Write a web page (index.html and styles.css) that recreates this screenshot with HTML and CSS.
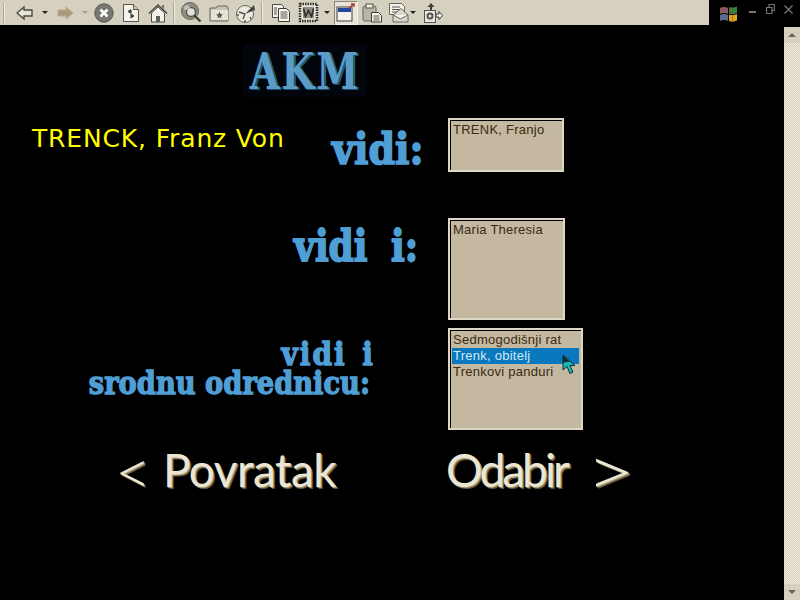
FILE: index.html
```html
<!DOCTYPE html>
<html lang="hr">
<head>
<meta charset="utf-8">
<title>AKM</title>
<link rel="stylesheet" href="styles.css">
</head>
<body>
<header class="chrome">
  <div class="toolbar">
    <span class="sep first"></span>
    <span class="cell w-back"><svg width="18" height="16" viewBox="0 0 18 16"><path d="M1 8 8 2v3h8v6H8v3z" fill="#e8e4d8" stroke="#4a4a40" stroke-width="1.4"/></svg></span>
    <span class="cell w-drop"><i class="caret"></i></span>
    <span class="cell w-back"><svg width="18" height="16" viewBox="0 0 18 16"><path d="M17 8 10 2v3H2v6h8v3z" fill="#ab9a78" stroke="#b8aa8c"/></svg></span>
    <span class="cell w-drop"><i class="caret faint"></i></span>
    <span class="cell"><svg width="20" height="20" viewBox="0 0 20 20"><circle cx="10" cy="10" r="9.2" fill="#77776f" stroke="#55554f"/><path d="M6.500 6.500l7 7m0-7-7 7" stroke="#fff" stroke-width="2.600"/></svg></span>
    <span class="cell"><svg width="18" height="20" viewBox="0 0 18 20"><path d="M1.500 1.500h10l5 5v12h-15z" fill="#f4f2ea" stroke="#55554f"/><path d="M11.500 1.500v5h5" fill="#cfcabc" stroke="#55554f"/><path d="M9 6.500 6 8.500l3 2zM6.500 8.500h3M9 15l3-2-3-2zM11.500 13h-3" fill="#3d4a3d" stroke="#3d4a3d"/></svg></span>
    <span class="cell"><svg width="20" height="20" viewBox="0 0 20 20"><path d="M1 10.500 10 2l9 8.500" fill="none" stroke="#4a4a40" stroke-width="1.600"/><path d="M3.500 10 10 4l6.500 6v9h-13z" fill="#f4f2ea" stroke="#4a4a40"/><path d="M8 19v-6h4v6z" fill="#5c6158"/><path d="M14 2h2v4l-2-2z" fill="#6b6b60"/></svg></span>
    <span class="sep"></span>
    <span class="cell"><svg width="21" height="22" viewBox="0 0 21 22"><circle cx="9" cy="9" r="8.500" fill="#8f8f86" stroke="#66665e"/><circle cx="10" cy="10" r="4.500" fill="#e4e2d8" stroke="#55554f" stroke-width="1.400"/><path d="M3 5l4-2 2 3-5 2zM13 15l3-1" stroke="#c0beb4" fill="#c0beb4"/><path d="M13.500 13.500l6 6" stroke="#3d3d38" stroke-width="2.400"/></svg></span>
    <span class="cell"><svg width="20" height="18" viewBox="0 0 20 18"><path d="M1 4h6l1.500-2H18l1 2v13H1z" fill="#c8c4b6" stroke="#66665e"/><path d="M2 6h17v10H2z" fill="#e6e3d8"/><path d="M10.500 7.500l1 2.500 2.500.5-2 1.500.5 2.500-2-1.500-2 1.500.5-2.500-2-1.500 2.500-.5z" fill="#55554f"/></svg></span>
    <span class="cell"><svg width="21" height="20" viewBox="0 0 21 20"><circle cx="10" cy="11" r="8.500" fill="#eceade" stroke="#66665e"/><path d="M10 11 19 2l1 5z" fill="#44443e"/><path d="M10 11 4 9M10 11l-2 5M2 12h2M10 17v2M15 14l1 2" stroke="#55554f" stroke-width="1.400"/></svg></span>
    <span class="sep"></span>
    <span class="cell w-doc"><svg width="20" height="20" viewBox="0 0 20 20"><path d="M1.500 1.500h9l2 2v11h-11z" fill="#f4f2ea" stroke="#4a4a40"/><path d="M7.500 5.500h8l3 3v10h-11z" fill="#f8f6ee" stroke="#3d3d38"/><path d="M9.500 9h7M9.500 11h7M9.500 13h7M9.500 15h7M3 5h3M3 7h3M3 9h3M3 11h3" stroke="#55554f"/></svg></span>
    <span class="cell"><svg width="21" height="21" viewBox="0 0 21 21"><rect x="2" y="2" width="17" height="17" fill="#e6e3d8" stroke="#2e2e2a" stroke-width="2.500" stroke-dasharray="1.500 1"/><rect x="5" y="5" width="11" height="11" fill="#8f8d84"/><path d="M5.500 6.500l2 8 3-6 3 6 2-8" fill="none" stroke="#2e2e2a" stroke-width="1.600"/></svg></span>
    <span class="cell w-drop2"><i class="caret"></i></span>
    <span class="active"><svg width="20" height="19" viewBox="0 0 20 19"><rect x="1" y="4" width="15" height="14" fill="#f4f2ea" stroke="#3d3d38"/><rect x="2" y="5" width="13" height="4" fill="#24459c"/><path d="M13 5l5-4M15 1h3v3" fill="none" stroke="#b23a2a" stroke-width="1.400"/></svg></span>
    <span class="cell w-clip"><svg width="21" height="20" viewBox="0 0 21 20"><rect x="1" y="3" width="13" height="15" rx="2" fill="#b9b5a7" stroke="#66665e"/><rect x="4" y="1" width="7" height="4" fill="#f0eee4" stroke="#55554f"/><path d="M9.500 9.500h7l3 3v6.500h-10z" fill="#f8f6ee" stroke="#3d3d38"/><path d="M11.500 13h6M11.500 15h6M11.500 17h6" stroke="#55554f"/></svg></span>
    <span class="cell w-mail"><svg width="21" height="21" viewBox="0 0 21 21"><path d="M1.500 1.500h12l3 3v8h-15z" fill="#f4f2ea" stroke="#66665e"/><path d="M4 5h8M4 7.500h8M4 10h6" stroke="#55554f"/><path d="M5 13 13 6.500l7 6.500v7H5z" fill="#dcd9cc" stroke="#66665e"/><path d="M5 13l7.500 4 7.500-4" fill="#f4f2ea" stroke="#66665e"/></svg></span>
    <span class="cell w-drop3"><i class="caret"></i></span>
    <span class="cell w-misc"><svg width="20" height="22" viewBox="0 0 20 22"><path d="M8 1 4.500 5H7v3h2V5h2.500z" fill="#3d3d38"/><rect x="1.500" y="8.500" width="11" height="12" fill="#e8e6dc" stroke="#55554f"/><circle cx="7" cy="14" r="3.500" fill="#55554f"/><circle cx="7" cy="14" r="1.500" fill="#eceade"/><path d="M13 12h3V9.500l3.500 4-3.500 4V15h-3z" fill="#f4f2ea" stroke="#3d3d38"/></svg></span>
  </div>
  <div class="winbar">
    <svg class="flag" width="22" height="20" viewBox="0 0 22 20"><path d="M2 4q4-2 8 0v6q-4-2-8 0z" fill="#8a5a60"/><path d="M2 11q4-2 8 0v6q-4-2-8 0z" fill="#5a6a90"/><path d="M11 3q4 1.500 8-.5v6.500q-4 2-8 .5z" fill="#2e8a3a"/><path d="M11 10.500q4 1.500 8-.5v6.500q-4 2-8 .5z" fill="#d8a820"/><path d="M11 3h1v7h-1zM14 3h1v14h-1z" fill="#b02a20" opacity=".5"/></svg>
    <span class="win-min"></span>
    <svg class="win-ctl" width="9" height="10" viewBox="0 0 9 10"><path d="M.5 3.500h5.500v6H.5zM3 3.500V.5h5.500v6H6" fill="none" stroke="#77756c" stroke-width="1.200"/></svg>
    <svg class="win-ctl win-close" width="9" height="9" viewBox="0 0 9 9"><path d="M.5.500l8 8m0-8-8 8" stroke="#77756c" stroke-width="1.300"/></svg>
  </div>
</header>

<div class="body-wrap">
  <main class="page">
    <div class="logo-row"><div class="logo"><span class="logo-text">AKM</span></div></div>

    <section class="row row-one">
      <h1 class="name">TRENCK, Franz Von</h1>
      <span class="label label-vidi">vidi:</span>
      <ul class="listbox box-one"><li>TRENK, Franjo</li></ul>
    </section>

    <section class="row row-two">
      <span class="label label-i">vidi i:</span>
      <ul class="listbox box-two"><li>Maria Theresia</li></ul>
    </section>

    <section class="row row-three">
      <div class="label-stack">
        <span class="label small first-line">vidi i</span>
        <span class="label small second-line">srodnu odrednicu:</span>
      </div>
      <div class="list-wrap">
        <ul class="listbox box-three">
          <li>Sedmogodišnji rat</li>
          <li class="selected">Trenk, obitelj</li>
          <li>Trenkovi panduri</li>
        </ul>
        <svg class="cursor" width="16" height="22" viewBox="0 0 16 22"><path d="M1 1v15l4-3.500 3 7 3-1.500-3-6.500h5z" fill="#16b8c0" stroke="#0c2c30"/><path d="M1 1v8l4-1 3 0z" fill="#0c3034"/></svg>
      </div>
    </section>

    <nav class="row nav-row">
      <a class="nav nav-back"><span class="chev">&lt;</span><span class="nav-word word-back">Povratak</span></a>
      <a class="nav nav-next"><span class="nav-word word-next">Odabir</span><span class="chev chev-next">&gt;</span></a>
    </nav>
  </main>
  <aside class="scrollbar">
    <span class="sb-btn"><i class="sb-up"></i></span>
    <span class="sb-track"></span>
    <span class="sb-btn"><i class="sb-down"></i></span>
  </aside>
</div>
</body>
</html>
```

FILE: styles.css
```css
* { box-sizing: border-box; }
html, body { margin: 0; height: 100%; background: #000; overflow: hidden; }
body { display: flex; flex-direction: column; width: 800px; height: 600px; font-family: "Liberation Sans", Arial, sans-serif; }

.chrome { display: flex; height: 27px; flex: none; align-items: flex-start; background: #000; }
.toolbar { width: 709px; height: 25px; background: #d6d0c0; display: flex; align-items: center; padding-left: 3px; }
.sep { width: 2px; height: 21px; background: #a8a498; border-right: 1px solid #f0ece0; margin: 0 3px 0 2px; flex: none; }
.sep.first { margin: 0 5px 0 0; }
.cell { width: 27px; height: 25px; flex: none; display: flex; align-items: center; justify-content: center; }
.w-back { width: 29px; }
.w-drop { width: 11px; }
.w-doc { width: 29px; }
.w-drop2 { width: 10px; }
.w-clip { width: 28px; }
.w-mail { width: 24px; }
.w-drop3 { width: 6px; }
.w-misc { width: 34px; }
.caret { display: block; width: 0; height: 0; border: 3px solid transparent; border-top: 3px solid #222; border-bottom: 0; }
.caret.faint { border-top-color: #a09c90; }
.active { width: 24px; height: 24px; margin-left: 2px; flex: none; display: flex; align-items: center; justify-content: center; background: #e8e4d8; border: 1px solid; border-color: #8a867a #f6f2e8 #f6f2e8 #8a867a; }

.winbar { flex: 1; height: 27px; display: flex; align-items: center; padding-left: 9px; }
.flag { margin-right: 9px; }
.win-min { width: 7px; height: 2px; background: #77756c; margin: 0 10px 4px 0; }
.win-ctl { margin-bottom: 9px; }
.win-close { margin-left: 9px; }

.body-wrap { flex: 1; display: flex; min-height: 0; }
.page { flex: 1; padding-top: 18px; }
.row { display: flex; }

.logo-row { height: 54px; padding-left: 243px; }
.logo { width: 124px; height: 52px; display: flex; align-items: center; justify-content: center; background: #02060c; }
.logo-text { display: block; color: #5a9cc6; font: bold 38px/44px "DejaVu Serif", serif; letter-spacing: 2px; transform: scaleY(1.35); text-shadow: 1px 1px 0 #1c4f78, 2px 1px 0 #2e6a70; }

.label { color: #4f9fd6; font-family: "DejaVu Serif", serif; font-weight: bold; -webkit-text-stroke: 1.5px #4f9fd6; line-height: 1; transform: scaleY(1.15); white-space: nowrap; }
.listbox { list-style: none; margin: 0; padding: 2px; background: #c4b8a0; border: 2px solid #dcd6c4; color: #3a2a10; font-size: 13px; line-height: 16px; letter-spacing: .25px; box-shadow: inset 1px 1px 0 #000; flex: none; }
.listbox li { padding-left: 1px; }
.listbox li.selected { background: #0a78bc; color: #cfe8f6; }

.row-one { margin-top: 19px; height: 54px; }
.name { margin: 7px 0 0 32px; width: 300px; font: normal 25px/28px "DejaVu Sans", Verdana, sans-serif; letter-spacing: .85px; color: #ff0; white-space: nowrap; }
.label-vidi { font-size: 38px; width: 116px; height: 38px; margin-top: 12px; }
.box-one { width: 116px; height: 54px; }

.row-two { margin-top: 46px; height: 102px; }
.label-i { font-size: 36px; width: 154px; height: 36px; margin: 9px 0 0 294px; word-spacing: 11px; transform: scaleY(1.2); }
.box-two { width: 117px; height: 102px; }

.row-three { margin-top: 8px; height: 102px; }
.label-stack { width: 448px; padding: 12px 78px 0 0; display: flex; flex-direction: column; align-items: flex-end; }
.label.small { line-height: 29px; -webkit-text-stroke-width: 1.2px; }
.first-line { font-size: 28px; margin-right: -5px; letter-spacing: 2px; word-spacing: 4px; }
.second-line { font-size: 27.3px; }
.list-wrap { position: relative; }
.box-three { width: 135px; height: 102px; }
.cursor { position: absolute; left: 114px; top: 26px; }

.nav-row { margin-top: 12px; }
.nav { display: flex; align-items: center; color: #ebe6d4; font: 400 46px/56px "Lato", sans-serif; text-shadow: 1px 1px 0 #a89c78, 2px 2px 0 #5a5238; }
.nav-back { margin-left: 115px; width: 331px; gap: 12px; }
.nav-next { gap: 19px; }
.chev { font-size: 62px; font-weight: 300; line-height: 50px; }
.chev-next { font-size: 68px; transform: scaleX(1.25); transform-origin: 0 50%; }
.word-back { letter-spacing: -.5px; }
.word-next { letter-spacing: -3px; }

.scrollbar { width: 16px; flex: none; display: flex; flex-direction: column; }
.sb-btn { height: 16px; flex: none; background: #d6d0c0; display: flex; align-items: center; justify-content: center; }
.sb-track { flex: 1; background: conic-gradient(#efeadd 25%, #d6d0c0 0 50%, #efeadd 0 75%, #d6d0c0 0) 0 0 / 2px 2px; }
.sb-up, .sb-down { display: block; width: 0; height: 0; border: 4px solid transparent; }
.sb-up { border-bottom: 4px solid #6a675c; border-top: 0; }
.sb-down { border-top: 4px solid #6a675c; border-bottom: 0; }
```
